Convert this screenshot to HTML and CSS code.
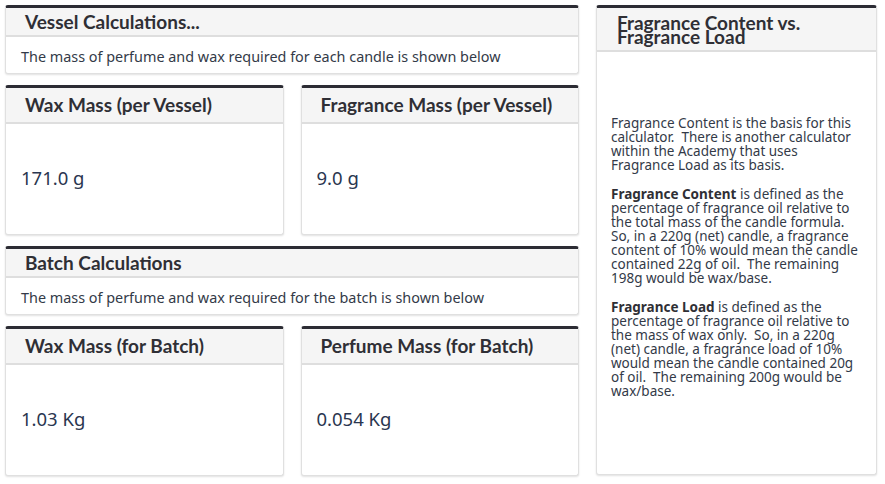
FILE: index.html
```html
<!DOCTYPE html>
<html lang="en">
<head>
    <meta charset="UTF-8">
    <title>Candle Calculator</title>
    <link rel="stylesheet" href="styles.css">
</head>
<body>
    <div class="page">
        <div class="left">
            <div class="card">
                <div class="card-head">Vessel Calculations...</div>
                <div class="card-text">The mass of perfume and wax required for each candle is shown below</div>
            </div>
            <div class="row">
                <div class="card">
                    <div class="card-head">Wax Mass (per Vessel)</div>
                    <div class="card-value">171.0 g</div>
                </div>
                <div class="card">
                    <div class="card-head">Fragrance Mass (per Vessel)</div>
                    <div class="card-value">9.0 g</div>
                </div>
            </div>
            <div class="card">
                <div class="card-head">Batch Calculations</div>
                <div class="card-text">The mass of perfume and wax required for the batch is shown below</div>
            </div>
            <div class="row">
                <div class="card">
                    <div class="card-head">Wax Mass (for Batch)</div>
                    <div class="card-value">1.03 Kg</div>
                </div>
                <div class="card">
                    <div class="card-head">Perfume Mass (for Batch)</div>
                    <div class="card-value">0.054 Kg</div>
                </div>
            </div>
        </div>
        <div class="card side">
            <div class="card-head side-head">Fragrance Content vs. Fragrance Load</div>
            <div class="side-body">
                <p>Fragrance Content is the basis for this calculator.&nbsp; There is another calculator within the Academy that uses Fragrance Load as its basis.</p>
                <p><b>Fragrance Content</b> is defined as the percentage of fragrance oil relative to the total mass of the candle formula.&nbsp; So, in a 220g (net) candle, a fragrance content of 10% would mean the candle contained 22g of oil.&nbsp; The remaining 198g would be wax/base.</p>
                <p><b>Fragrance Load</b> is defined as the percentage of fragrance oil relative to the mass of wax only.&nbsp; So, in a 220g (net) candle, a fragrance load of 10% would mean the candle contained 20g of oil.&nbsp; The remaining 200g would be wax/base.</p>
            </div>
        </div>
    </div>
</body>
</html>
```

FILE: styles.css
```css
* {
    margin: 0;
    padding: 0;
    box-sizing: border-box;
}
body {
    background: #fff;
    font-family: "Noto Sans", sans-serif;
    color: #333a48;
}
.page {
    display: flex;
    gap: 17px;
    padding: 5px 8px 9px 5px;
}
.left {
    width: 574px;
    display: flex;
    flex-direction: column;
    gap: 11px;
}
.row {
    display: flex;
    gap: 17px;
}
.row .card {
    flex: 1;
}
.card {
    background: #fff;
    border: 1px solid #e0e0e0;
    border-top: 3px solid #2c2c34;
    border-radius: 3px;
    box-shadow: 0 1px 2px rgba(0,0,0,0.12);
}
.card-head {
    background: #f5f5f5;
    border-bottom: 2px solid #dedede;
    padding: 0 19px;
    height: 29px;
    line-height: 27px;
    font-family: Lato, sans-serif;
    font-weight: bold;
    font-size: 19px;
    color: #2f2f35;
}
.row .card-head {
    height: 36px;
    line-height: 33px;
}
.card-text {
    padding: 10px 15px 7px;
    font-size: 14.4px;
    line-height: 19px;
}
.card-value {
    height: 110px;
    display: flex;
    align-items: center;
    padding: 0 15px 3px;
    font-size: 18.5px;
    color: #2a3650;
}
.side {
    width: 281px;
    height: 470px;
}
.side .side-head {
    height: 44px;
    line-height: 14px;
    padding: 8px 20px 0;
    font-size: 19px;
}
.side-body {
    padding: 64px 14px 0;
    font-size: 13.5px;
    line-height: 14px;
}
.side-body p {
    margin-bottom: 15px;
}
.side-body b {
    color: #2f2f35;
}
```
